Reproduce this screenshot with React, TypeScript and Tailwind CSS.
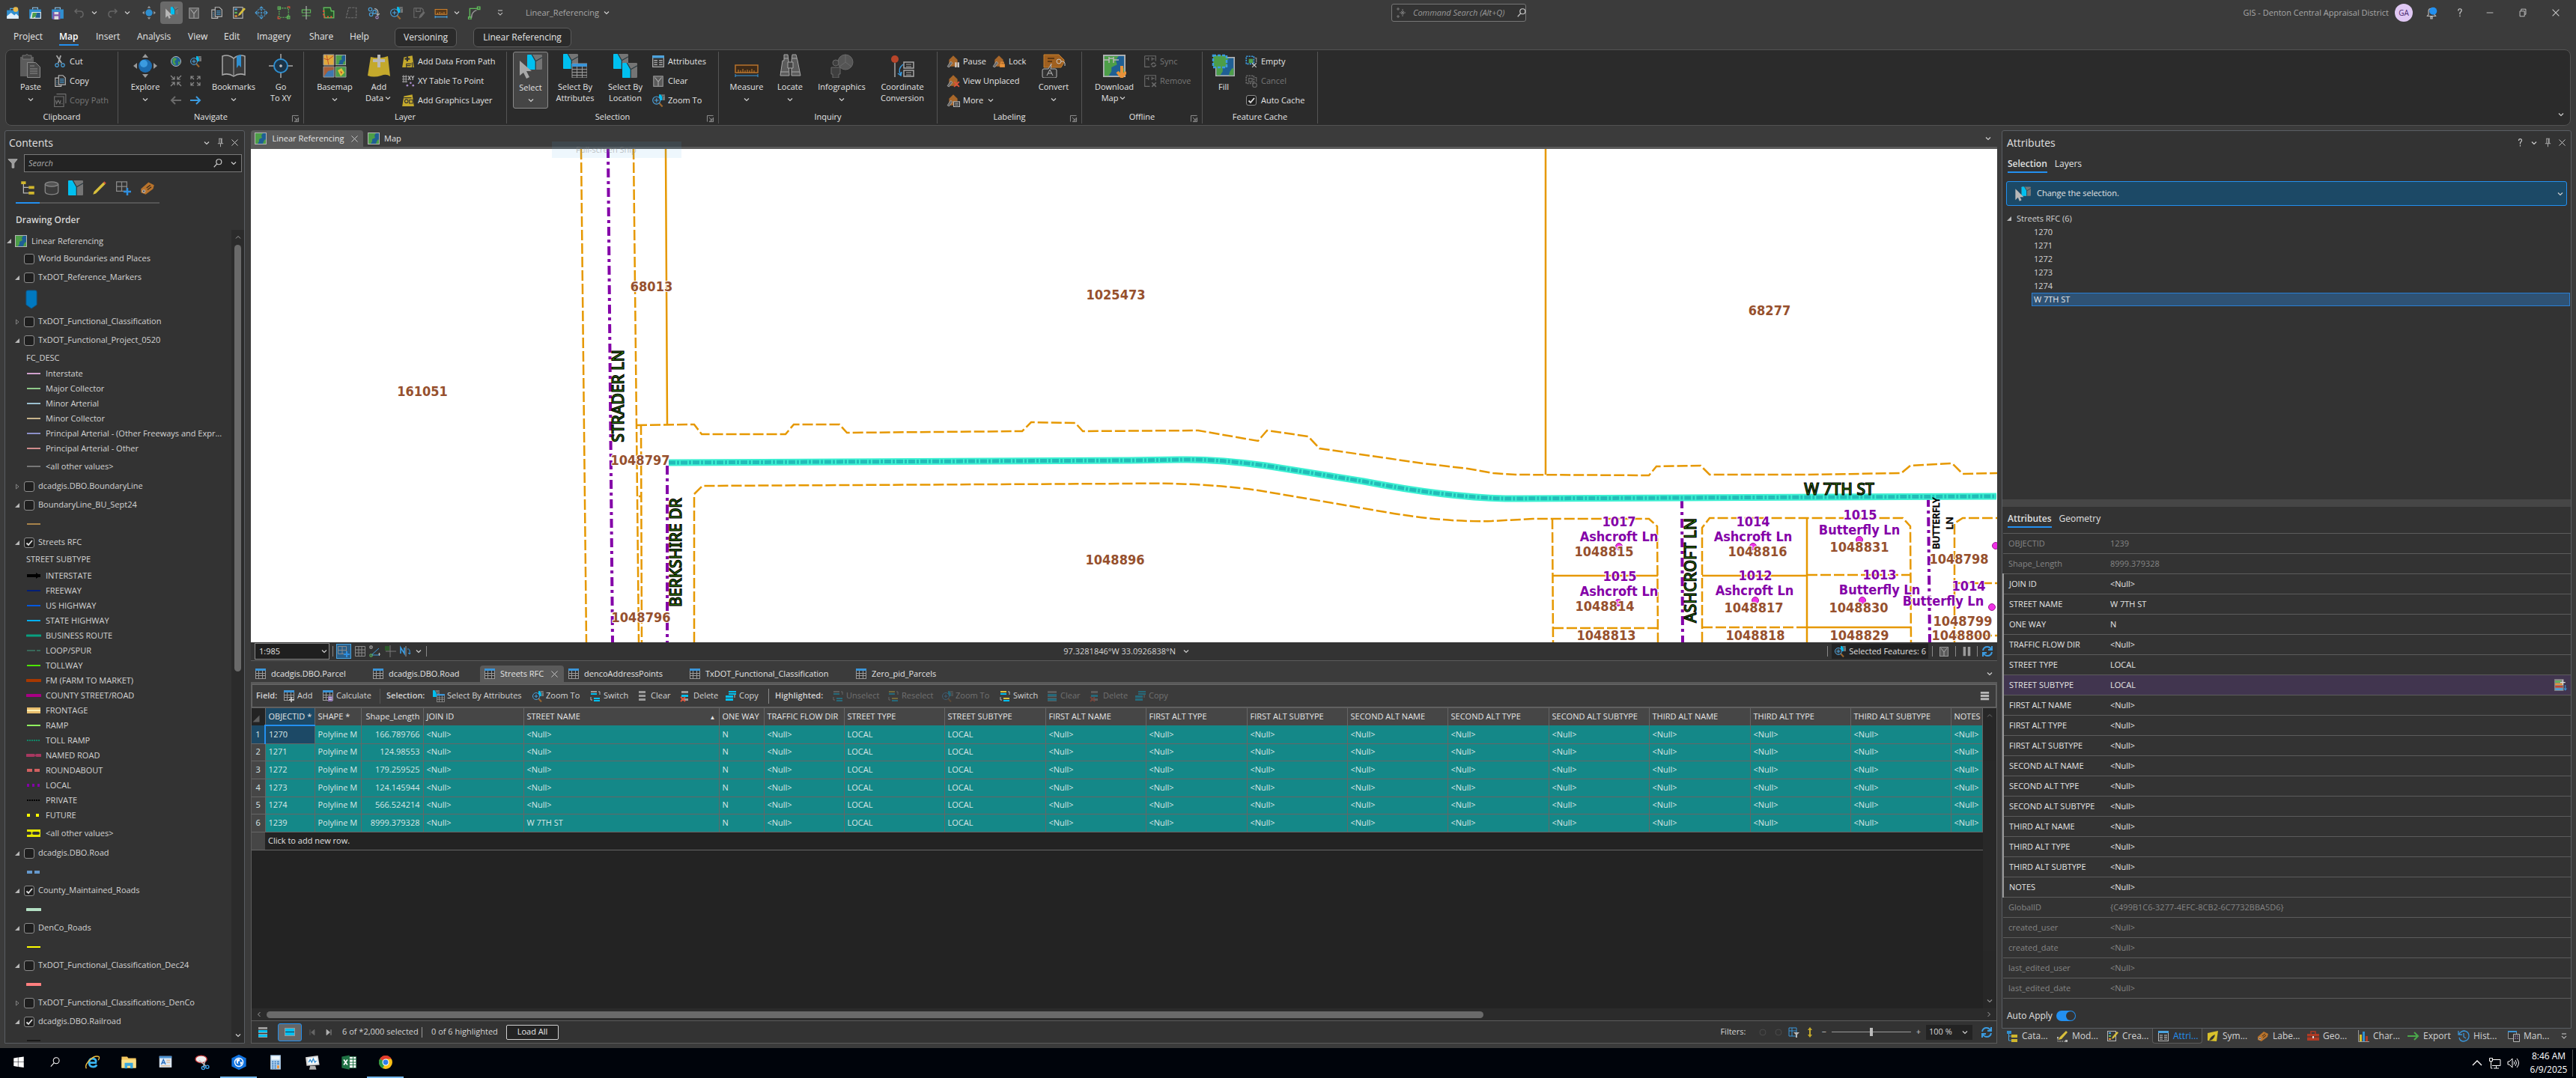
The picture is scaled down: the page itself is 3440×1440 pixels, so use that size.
import { ReactNode } from 'react';
import clsx from 'clsx';

/* ---------- icons ---------- */

const MapTile = ({ x = 0, y = 0, s = 16 }: { x?: number; y?: number; s?: number }) => (
  <g transform={`translate(${x} ${y}) scale(${s / 16})`}>
    <rect x=".5" y=".5" width="15" height="15" fill="#1f5f94" stroke="#b4b4b4" />
    <path d="M1 1h10l-2 3 1 3-4 2v3l-2 3H1z" fill="#4d9e48" />
    <path d="M12 12l2-3 1 1v5h-4z" fill="#4d9e48" />
  </g>
);

const CyanTile = ({ x = 0, y = 0, s = 16 }: { x?: number; y?: number; s?: number }) => (
  <g transform={`translate(${x} ${y}) scale(${s / 16})`}>
    <rect width="16" height="16" rx="1" fill="#757575" />
    <path d="M0 1q0-1 1-1h4l4 7v9H1q-1 0-1-1z" fill="#00c0f0" />
    <path d="M5 0l4 7v9M9 7l7-4" stroke="#2b3a40" fill="none" />
  </g>
);

const GridTable = ({ x = 0, y = 0 }: { x?: number; y?: number }) => (
  <g transform={`translate(${x} ${y})`}>
    <rect x=".5" y=".5" width="13" height="13" fill="#333" stroke="#9a9a9a" />
    <rect x="0" y="0" width="14" height="3" fill="#3b95d8" />
    <path d="M1 6.5h12M1 9.5h12M4.5 3v10M9.5 3v10" stroke="#9a9a9a" />
  </g>
);

const Lens = () => (
  <g fill="none">
    <path d="M9 11l4 4.5" stroke="#9b6730" strokeWidth="2" />
    <circle cx="6" cy="8" r="4.5" fill="#333" stroke="#4aa3df" />
    <path d="M3.5 8h5M6 5.5v5" stroke="#4aa3df" />
  </g>
);

const House = () => (
  <g>
    <path d="M8 1l5 5v8H3V6z" fill="#a8672a" />
    <path d="M1 14l4-6 2 2-4 5z" fill="#666" stroke="#b0b0b0" strokeWidth=".7" />
  </g>
);

const Stack = ({ a, b }: { a: string; b: string }) => (
  <g>
    <path d="M3 1h9v3H3z" fill={a} />
    <path d="M3 6h9v3H3z" fill={b} />
    <path d="M3 11h9v3H3z" fill={a} />
  </g>
);

const icons: Record<string, ReactNode> = {
  newProject: <g><path d="M1 5h14v10H1z" fill="#2f8fd0" /><path d="M1 12l5-4 4 3 2-2 3 3v3H1z" fill="#dfeefa" /><path d="M5 5V3h4" stroke="#4aa3df" fill="none" /><circle cx="11.5" cy="4" r="3" fill="#e8b84a" /></g>,
  openProject: <g><path d="M1 4h14v11H1z" fill="#2f8fd0" /><path d="M5 4V2h6v2" stroke="#8fc6ee" fill="none" /><path d="M4 7h11v8H2z" fill="#e2e6e8" /><path d="M5 8h5l-1 4-3 2H4z" fill="#4d9e48" /><path d="M10 8h4v6H8z" fill="#1f5f94" /></g>,
  saveProject: <g><path d="M1 4h14v11H1z" fill="#2f8fd0" /><path d="M5 4V2h6v2" stroke="#8fc6ee" fill="none" /><path d="M2 7h9v9H2z" fill="#7d55a8" /><path d="M4 7h5v3H4zM4 12h5v4H4z" fill="#ddd" /></g>,
  undo: <path d="M5 3L2 6l3 3M2 6h7q4 0 4 4t-4 4" fill="none" stroke="#666" strokeWidth="1.5" />,
  redo: <path d="M11 3l3 3-3 3M14 6H7q-4 0-4 4t4 4" fill="none" stroke="#666" strokeWidth="1.5" />,
  explore: <g><circle cx="8" cy="8" r="4.2" fill="#2f8fd0" /><path d="M8 0l2 2.5H6zM8 16l2-2.5H6zM0 8l2.5-2v4zM16 8l-2.5-2v4z" fill="#9a9a9a" /></g>,
  select: <g><CyanTile x={7} y={1} s={9} /><path d="M1 3v11l2.5-2.5L5 15l2-1-1.5-3H9z" fill="#b8b8b8" /></g>,
  clear: <g><rect x="2.5" y="2.5" width="11" height="12" fill="#5a5a5a" stroke="#9a9a9a" /><path d="M4 4l4 5v5M8 9l4-5" stroke="#a8a8a8" fill="none" /></g>,
  copy: <g fill="none" stroke="#b8b8b8"><path d="M6.5 1.5h5l3 3v8h-8z" fill="#333" /><path d="M6.5 4.5h-4v10h7v-2" /><path d="M8 6h5M8 8h5M8 10h5" stroke="#4aa3df" /><path d="M4 8h1M4 10h1M4 12h1" stroke="#4aa3df" /></g>,
  editForm: <g><rect x="1.5" y="1.5" width="11" height="13" fill="none" stroke="#b8b8b8" /><path d="M3 3h3v2H3z" fill="#4aa3df" /><path d="M3 7h3v2H3z" fill="#5fb85a" /><path d="M3 11h3v2H3z" fill="#e8923a" /><path d="M7 12l1-3 6-7 2 1.5-6 7z" fill="#d8bf3c" /></g>,
  move: <g stroke="#4aa3df" fill="none"><path d="M8 1v14M1 8h14" strokeDasharray="2 1" /><path d="M6 3l2-2 2 2M6 13l2 2 2-2M3 6L1 8l2 2M13 6l2 2-2 2" /><path d="M4 4h8v8H4z" strokeDasharray="1 1" /></g>,
  vertices: <g fill="none" stroke="#5fb85a"><path d="M2.5 2.5v11h11v-11L2.5 2.5" strokeDasharray="2 1" /><path d="M1 1h3v3H1zM12 12h3v3h-3z" stroke="#5fb85a" /><path d="M12 1h3v2M1 12v3h3" stroke="#e0533a" /></g>,
  align: <g fill="none" stroke="#5fb85a"><path d="M3 4.5h10M3 11.5h10M3 4v4h10V4" /><path d="M8 0v16" stroke="#b8b8b8" /></g>,
  reshape: <g fill="none"><path d="M2 2h8l1 4h3v8H3z" fill="#28502a" stroke="#5fb85a" strokeWidth="1.3" /><path d="M2 5v8h10" stroke="#e0533a" strokeDasharray="2 2" strokeWidth="2" /></g>,
  trapezoid: <path d="M5 2h9v12H2z" fill="none" stroke="#707070" strokeDasharray="3 1" />,
  trace: <g fill="none" stroke="#4aa3df"><circle cx="4" cy="4" r="2" /><circle cx="9" cy="7" r="2" /><circle cx="5" cy="10" r="2" /><path d="M9 3q5 1 4 7M11 9l2 2 2-2" stroke="#b8b8b8" /><circle cx="12" cy="13.5" r="1.5" stroke="#a58ac8" /></g>,
  zoomTo: <g><CyanTile x={9} y={1} s={7} /><Lens /></g>,
  saveEdits: <g fill="none" stroke="#6a6a6a"><path d="M2.5 2.5h9l2 2v3M2.5 2.5v11h4M5 2.5v4h5v-4" /><path d="M9 14l1-3 4-4 1 1-4 5z" fill="#6a6a6a" /></g>,
  measure: <g><path d="M1 4h14v6H1z" fill="#5a3a1a" stroke="#c9802f" /><path d="M4 10V8M6.5 10V7M9 10V8M11.5 10V7" stroke="#c9802f" /><path d="M1 13h14M1 11.5v3M15 11.5v3" stroke="#4aa3df" /></g>,
  route: <g fill="none" stroke="#5fb85a" strokeWidth="1.3"><path d="M3 14V3h10" /><path d="M1.5 13h3v3h-3zM12 1h3v3h-3z" /><path d="M5 14q0-7 6-9" stroke="#9a9a9a" /></g>,
  cut: <g fill="none"><path d="M4 1l6 9M9 1L6 10" stroke="#a8a8a8" strokeWidth="1.6" /><circle cx="4.5" cy="12.5" r="2" stroke="#4aa3df" /><circle cx="11.5" cy="12.5" r="2" stroke="#4aa3df" /></g>,
  copyPath: <g fill="none" stroke="#707070"><path d="M4 .5h11M15 .5v11M1.5 3.5h11v12h-11z" /><path d="M3 8l1 4 2-4 2 4 1-4M10 12h1" /></g>,
  globe: <g><circle cx="8" cy="8" r="6.5" fill="#1f5f94" stroke="#b8b8b8" /><path d="M4 4q4-2 5 1l-3 3 2 4-2 1q-4-4-2-9zM11 8l3 1-3 4z" fill="#4d9e48" /></g>,
  zoomIn: <g stroke="#8a8a8a" fill="none" strokeWidth="1.2"><path d="M1 1l5 5M2 6h4V2M15 1l-5 5M14 6h-4V2M1 15l5-5M2 10h4v4M15 15l-5-5M14 10h-4v4" /></g>,
  zoomOut: <g stroke="#8a8a8a" fill="none" strokeWidth="1.2"><path d="M2 2l4 4M2 6V2h4M14 2l-4 4M14 6V2h-4M2 14l4-4M2 10v4h4M14 14l-4-4M14 10v4h-4" /></g>,
  prev: <path d="M7 3L2 8l5 5M2 8h13" fill="none" stroke="#6a6a6a" strokeWidth="2" />,
  next: <path d="M9 3l5 5-5 5M14 8H1" fill="none" stroke="#3b9be0" strokeWidth="2" />,
  addPath: <g><path d="M3 3l10-2 2 14H1z" fill="#c4a92c" /><path d="M7 2v6M4 5h6" stroke="#333" strokeWidth="2" /><path d="M6 15v-4h6M6 13h5M13 9v6" stroke="#333" fill="none" /></g>,
  xyTable: <g><path d="M1 3h6M1 6h6M1 9h6M2.5 1v9M5.5 1v9" stroke="#9a9a9a" /><path d="M8 2l3 5M11 2L8 7M12 2l1.5 2.5L15 2M13.5 4.5V7" stroke="#c0c0c0" fill="none" /><circle cx="7" cy="13.5" r="1.2" fill="#a58ac8" /><circle cx="11" cy="10.5" r="1.2" fill="#a58ac8" /><circle cx="14" cy="13.5" r="1.2" fill="#a58ac8" /></g>,
  addGraphics: <g><path d="M3 3l10-2 2 14H1z" fill="#c4a92c" /><circle cx="6" cy="9" r="2" fill="none" stroke="#333" /><path d="M9.5 7.5h4v4h-4zM3 5h9" fill="none" stroke="#333" /></g>,
  attributes: <g><rect x="1.5" y="1.5" width="13" height="13" fill="#333" stroke="#b8b8b8" /><path d="M1 1h14v3H1z" fill="#4aa3df" /><path d="M3 7h4M3 9.5h4M3 12h4M9 7h4M9 9.5h4M9 12h4" stroke="#c8c8c8" /></g>,
  pause: <g><House /><path d="M10 9h2v6h-2zM13 9h2v6h-2z" fill="#d0d0d0" /></g>,
  lock: <g><House /><path d="M9 11h6v4H9z" fill="#e8923a" /><path d="M10.5 11V9h3v2" stroke="#e8923a" fill="none" /></g>,
  unplaced: <g><House /><path d="M9 9l6 6M15 9l-6 6" stroke="#e0533a" strokeWidth="1.8" /></g>,
  more: <g><House /><path d="M8.5 9.5h7v6h-7z" fill="#333" stroke="#b8b8b8" /><path d="M10 11.5h4M10 13.5h4" stroke="#b8b8b8" /></g>,
  sync: <g fill="none" stroke="#6a6a6a"><path d="M1.5 1.5h13v6M1.5 1.5v13h6M3 5h3M10 5h3M6 3v4M10 3v4" /><path d="M9 12q3-4 5-1M15 12q-3 4-5 1" strokeWidth="1.3" /></g>,
  remove: <g fill="none" stroke="#6a6a6a"><path d="M1.5 1.5h13v6M1.5 1.5v13h6M3 5h3M10 5h3M6 3v4M10 3v4" /><path d="M10 10l5 5M15 10l-5 5" strokeWidth="1.5" /></g>,
  empty: <g fill="none"><path d="M5 5h5v5H5z" fill="#4d9e48" /><path d="M2 2h9v9H2z" stroke="#3b9be0" strokeWidth="1.5" strokeDasharray="2 1" /><path d="M12 4h2v5" stroke="#9a9a9a" /><path d="M9 10l5 5M14 10l-5 5" stroke="#c8c8c8" /></g>,
  cancel: <g fill="none" stroke="#6a6a6a"><path d="M2 2h9v9H2z" strokeWidth="1.5" strokeDasharray="2 1" /><path d="M5 5h4v4H5zM12 4h2v5" /><circle cx="12" cy="13" r="2.5" /></g>,
  mapTile: <MapTile />,
  listOrder: <g><path d="M1 1h5v3H1zM9 6h6v3H9zM9 12h6v3H9z" fill="#d0b62c" /><path d="M3.5 4v9.5H9M3.5 7.5H9" stroke="#b8b8b8" fill="none" /></g>,
  database: <g fill="#3c3c3c" stroke="#8a8a8a"><path d="M1 4v8q0 3 7 3t7-3V4" /><ellipse cx="8" cy="4" rx="7" ry="2.5" fill="#555" /></g>,
  cyanTile: <CyanTile />,
  pencil: <g><path d="M1 15l1-3L12 2l2 2L4 14z" fill="#d8bf3c" /><path d="M12 2l1-1 2 2-1 1z" fill="#e0533a" /></g>,
  gridPlus: <g fill="none"><path d="M.5 1.5h11v10H.5zM6 1.5v10M.5 6.5h11" stroke="#8a8a8a" /><path d="M12 8v8M8 12h8" stroke="#2f8fe0" strokeWidth="2" /></g>,
  tag: <g><path d="M1 9l8-7 6 3-1 4-8 6-5-2z" fill="#b8732c" /><path d="M7 8l4-3M8 10l4-3" stroke="#3a2a1a" /><circle cx="4" cy="11.5" r="1.3" fill="#333" stroke="#b0b0b0" /></g>,
  filter: <path d="M1 2h14L10 8v7H7V8z" fill="#9a9a9a" stroke="#b8b8b8" />,
  search: <g fill="none" stroke="#c8c8c8" strokeWidth="1.4"><circle cx="9.5" cy="6" r="4" /><path d="M6.5 9L2 14" /></g>,
  pin: <path d="M5 1.5h6M6 2v7M10 2v7M9 2v7M3.5 9.5h9M8 10v5" fill="none" stroke="#c8c8c8" />,
  close: <path d="M3 3l10 10M13 3L3 13" stroke="#c8c8c8" strokeWidth="1.2" />,
  chevron: <path d="M4 6l4 4 4-4" fill="none" stroke="#d0d0d0" strokeWidth="1.6" />,
  up: <path d="M4 10l4-4 4 4" fill="none" stroke="#a0a0a0" strokeWidth="1.3" />,
  launcher: <path d="M3 13V3h10M13 6v7H6M6 6l5 5M11 7v4H7" fill="none" stroke="#a8a8a8" />,
  open: <path d="M14 2v12H2z" fill="#b8b8b8" />,
  shut: <path d="M5 2l7 6-7 6z" fill="none" stroke="#9a9a9a" strokeWidth="1.5" />,
  gridTable: <GridTable x={1} y={1} />,
  grid: <path d="M1.5 1.5h13v13h-13zM1.5 6h13M1.5 10h13M6 1.5v13M10 1.5v13" fill="none" stroke="#8a8a8a" />,
  snap: <g fill="none"><path d="M1 1h3v3H1zM12 12h3M13.5 10v4" stroke="#b8b8b8" /><path d="M3 13L13 4M3 13h10" stroke="#3b9be0" /><path d="M1 12h3v3H1z" stroke="#5fb85a" /></g>,
  crosshair: <g><path d="M1 1h6v6H1z" fill="#2d5a2a" /><path d="M8 0v16M2 8h14" stroke="#7a7a7a" /></g>,
  north: <g fill="none" stroke="#3b9be0"><path d="M2 11V3l5 8V3" strokeWidth="1.6" /><path d="M9 1v14" stroke="#9a9a9a" /><path d="M11 5q4-1 3 6M12 10l2 2 1-2" /></g>,
  pauseBars: <path d="M3 1h4v14H3zM10 1h4v14h-4z" fill="#9a9a9a" />,
  refresh: <g fill="none" stroke="#3b9be0" strokeWidth="2"><path d="M2 7q1-5 6-5 3 0 5 3M14 1v5H9M14 9q-1 5-6 5-3 0-5-3M2 15v-5h5" /></g>,
  addField: <g><GridTable x={1} y={0} /><path d="M11 9v7M8 12.5h7" stroke="#d0d0d0" strokeWidth="1.5" /></g>,
  calcField: <g><GridTable x={1} y={0} /><path d="M8 8h6v7H8z" fill="#8a70b0" /><path d="M9 10h4M9 12.5h4" stroke="#ddd" /></g>,
  selectBy: <g><CyanTile x={0} y={0} s={9} /><g transform="translate(5 5) scale(.78)"><GridTable /></g></g>,
  switch: <g><path d="M2 1h8v2H2z" fill="#9a9a9a" /><path d="M2 4h8v2H2z" fill="#00c0f0" /><path d="M6 10h8v2H6zM6 13h8v2H6z" fill="#00c0f0" /><path d="M12 2h2v4M2 9v4h2" stroke="#b8b8b8" fill="none" /></g>,
  switchHi: <g><path d="M2 1h8v2H2z" fill="#d8bf3c" /><path d="M2 4h8v2H2z" fill="#00c0f0" /><path d="M6 10h8v2H6z" fill="#d8bf3c" /><path d="M6 13h8v2H6z" fill="#00c0f0" /><path d="M12 2h2v4M2 9v4h2" stroke="#b8b8b8" fill="none" /></g>,
  rows: <Stack a="#9a9a9a" b="#9a9a9a" />,
  rowsDelete: <g><Stack a="#9a9a9a" b="#00c0f0" /><path d="M2 9l6 6M8 9l-6 6" stroke="#e0533a" strokeWidth="1.8" /></g>,
  rowsCopy: <g><path d="M5 1h10v2H5zM5 4h10v2H5z" fill="#00c0f0" /><path d="M1 7h10v3H1zM1 11h10v3H1z" fill="#00c0f0" /><path d="M13 6v4" stroke="#b8b8b8" /></g>,
  rowsCyan: <g><path d="M2 1h12v14H2z" fill="#9a9a9a" /><path d="M2 5h12v3H2zM2 11h12v3H2z" fill="#00c0f0" /><path d="M2 4.5h12M2 9.5h12" stroke="#333" /></g>,
  rowsActive: <g><path d="M1 2h14v11H1z" fill="#9a9a9a" /><path d="M2 3h12v4H2zM2 8h12v4H2z" fill="#00c0f0" /><path d="M2 7.5h12" stroke="#234" /></g>,
  first: <path d="M4 3v10M12 3v10L6 8z" fill="#666" stroke="#666" />,
  last: <path d="M12 3v10M4 3v10l6-5z" fill="#b0b0b0" stroke="#b0b0b0" />,
  menu: <path d="M2 2h12v3H2zM2 6.5h12v3H2zM2 11h12v3H2z" fill="#b8b8b8" />,
  question: <g fill="none" stroke="#c8c8c8" strokeWidth="1.4"><path d="M5.5 5q0-3 2.5-3t2.5 2.5Q10.5 6 8 8v2.5M8 12v2" /></g>,
  bell: <g><path d="M3 12h10l-1.5-2V6q0-3-3.5-3T4.5 6v4zM7 13h2v2H7z" fill="none" stroke="#b8b8b8" /><circle cx="10" cy="6" r="4.5" fill="#2390f0" /></g>,
  minimize: <path d="M3 8h10" stroke="#d0d0d0" />,
  restore: <path d="M3.5 5.5h7v8h-7zM5.5 5V2.5h7v8H11" fill="none" stroke="#d0d0d0" />,
  sparkle: <path d="M4 1v4M2 3h4M10 3v10M6 8h8M4 11v4M2 13h4M8 6l4 4M12 6l-4 4" stroke="#7a7a7a" />,
  catalog: <g fill="none"><path d="M1 1h6v4H1z" fill="#2f8fd0" /><path d="M7 6h8v4H7zM7 12h8v4H7z" fill="#d0b62c" /><path d="M3.5 5v9H7M3.5 8H7" stroke="#4aa3df" /></g>,
  modify: <g><path d="M3 13l1-3 9-9 2 2-8 9z" fill="#d8bf3c" /><path d="M2 11v4h12" stroke="#b8b8b8" fill="none" strokeDasharray="2 1" /><path d="M1 9h2v2H1zM12 13h3v3h-3z" fill="#b8b8b8" /></g>,
  symbology: <g><path d="M1 4l14-3-2 14-12-1z" fill="#d8c02c" /><path d="M3 14q2-6 8-8-1 7-8 8z" fill="#333" /></g>,
  toolbox: <g><path d="M0 5h16v9H0z" fill="#b03a24" /><path d="M5 5V2h6v3" fill="none" stroke="#b03a24" strokeWidth="1.5" /><path d="M0 9h16" stroke="#333" /><path d="M7 8h2v3H7z" fill="#ddd" /></g>,
  chart: <g><path d="M1.5 0v15.5H16" stroke="#9a9a9a" fill="none" /><path d="M3 6h3v9H3z" fill="#d8c02c" /><path d="M7 2h3v13H7z" fill="#2f8fd0" /><path d="M11 8h3v7h-3z" fill="#b03a24" /></g>,
  export: <path d="M0 8h14M9 3l5 5-5 5" fill="none" stroke="#4aa84a" strokeWidth="2" />,
  history: <g fill="none" stroke="#3b95d8" strokeWidth="1.3"><path d="M2 5q3-4 7-4 6 1 6 7t-7 7q-5 0-6-5M1 1v5h5M8 4v5l3 2" /></g>,
  manage: <g><path d="M.5 1.5h11v10H.5z" fill="#333" stroke="#9a9a9a" /><path d="M0 1h12v2H0z" fill="#3b95d8" /><path d="M7.5 5.5h8v10h-8z" fill="#333" stroke="#b8b8b8" /><path d="M9 8h2M9 11h2M12 8h2M12 11h2" stroke="#a58ac8" /></g>,
  addRow: <g><path d="M1 1h11v14H1z" fill="#888" /><path d="M2 3h7v2H2z" fill="#5fb85a" /><path d="M2 6h9v2H2z" fill="#e8923a" /><path d="M2 9h9v2H2z" fill="#c04030" /><path d="M2 12h9v2H2z" fill="#4aa3df" /><path d="M11 2v6M8 5h6" stroke="#ddd" /><path d="M14 8v6M12.5 12l1.5 2 1.5-2" stroke="#3b95d8" fill="none" /></g>,
  filterTable: <g><path d="M1 2h10v11H1z" fill="none" stroke="#3b95d8" /><path d="M1 6h10M5 2v11" stroke="#3b95d8" /><path d="M7 8h8l-3 3v4h-2v-4z" fill="#b8b8b8" /></g>,
  updown: <path d="M8 1l3 4H9v6h2l-3 4-3-4h2V5H5z" fill="#c4a92c" />,
  dot: <circle cx="8" cy="8" r="4" fill="none" stroke="#4a4a4a" />,
  overflow: <path d="M4 4h8M4 8l4 4 4-4" fill="none" stroke="#d0d0d0" strokeWidth="1.4" />,
};

const Icon = ({ name, size = 16, className }: { name: string; size?: number; className?: string }) => (
  <svg viewBox="0 0 16 16" width={size} height={size} className={clsx('shrink-0', className)} aria-hidden="true">
    {icons[name]}
  </svg>
);

const bigIcons: Record<string, ReactNode> = {
  paste: <g><path d="M2 4h18v26H2z" fill="#5c5c5c" /><path d="M5 2h4q2-3 4 0h4v5H5z" fill="#444" stroke="#777" /><path d="M11.5 11.5h11l6 6v14h-17z" fill="#4a4a4a" stroke="#8a8a8a" /><path d="M15 16h6M15 20h10M15 23h10M15 26h10" stroke="#8a8a8a" /></g>,
  explore: <g><circle cx="16" cy="16" r="9" fill="#1c6cb0" /><circle cx="14" cy="13" r="5" fill="#3b9be0" /><path d="M16 0l4 5h-8zM16 32l4-5h-8zM0 16l5-4v8zM32 16l-5-4v8z" fill="#9a9a9a" /></g>,
  bookmarks: <g fill="none"><path d="M16 6Q9 0 1 3v25q8-3 15 2 7-5 15-2V3q-8-3-15 3z" fill="#3a3a3a" stroke="#a8a8a8" strokeWidth="1.5" /><path d="M16 6v24" stroke="#a8a8a8" /><path d="M20 3l6-2v17l-3-3-3 4z" fill="#2f8fd0" /></g>,
  goto: <g fill="none" stroke="#a8a8a8"><path d="M16 0v9M16 23v9M0 16h9M23 16h9" strokeWidth="1.5" /><circle cx="16" cy="16" r="9" stroke="#2f8fd0" strokeWidth="2" fill="#1b3448" /><circle cx="16" cy="16" r="1.5" fill="#c8c8c8" /></g>,
  basemap: <g><path d="M1 1h14v14H1z" fill="#e0a93c" /><path d="M1 6l6 2 8-6M5 1l3 14" stroke="#c0502a" fill="none" /><MapTile x={17} y={1} s={14} /><path d="M1 17h14v14H1z" fill="#a8603a" /><path d="M1 31l6-8 8-2v10z" fill="#3f78b0" /><path d="M17 17h14v14H17z" fill="#4d9e48" /><path d="M20 22l5-3 4 6-5 5z" fill="#e0c03c" /><path d="M23 23l3 1-1 3z" fill="#c0502a" /><path d="M1 1h14v14H1zM17 17h14v14H17zM1 17h14v14H1z" fill="none" stroke="#9a9a9a" /></g>,
  addData: <g><path d="M5 4q12 3 23-1l3 27q-5-4-12-1-10 3-18 0z" fill="#c4a92c" /><path d="M16 1v17M8 9h16" stroke="#b8b8b8" strokeWidth="4" /></g>,
  select: <g><CyanTile x={11} y={0} s={20} /><path d="M1 8v20l5-4 4 8 4-2-4-8h7z" fill="#a8a8a8" /></g>,
  selectAttr: <g><CyanTile s={20} /><path d="M12 13h20v19H12z" fill="#333" stroke="#9a9a9a" /><path d="M12 13h20v4H12z" fill="#3b95d8" /><path d="M12 20.5h20M12 24.5h20M12 28.5h20M18.5 17v15M25.5 17v15" stroke="#9a9a9a" /></g>,
  selectLoc: <g><CyanTile s={20} /><CyanTile x={12} y={12} s={20} /></g>,
  measure: <g><path d="M1 15h30v10H1z" fill="#3d2a18" stroke="#b8732c" strokeWidth="1.5" /><path d="M5 25v-4M8 25v-3M11 25v-5M14 25v-3M17 25v-4M20 25v-3M23 25v-5M26 25v-3" stroke="#c9802f" /><path d="M1 29h30M1 27v4M31 27v4" stroke="#3b9be0" /></g>,
  locate: <g fill="#5c5c5c" stroke="#a8a8a8"><path d="M8 1h5l1 8 1 20H3L6 9H8zM19 1h5l2 8 4 20H18l0-20z" /><path d="M13 11h7v8h-7z" fill="#444" /><path d="M3 24h11M18 24h11M8 6h6M19 6h6" /></g>,
  infographics: <g fill="#3f3f3f" stroke="#6a6a6a"><circle cx="21" cy="11" r="10" fill="#555" /><path d="M21 11V1M21 11l8 6M21 11l-8 6" /><circle cx="8" cy="12" r="4" /><path d="M2 18h12v9h-2v5H4v-5H2z" /></g>,
  coord: <g fill="none"><circle cx="6" cy="7" r="5" fill="#b8452a" /><path d="M6 12v19" stroke="#a8a8a8" strokeWidth="1.5" /><path d="M17 14q-8 6-3 14M10 26l4 3 1-5" stroke="#3b9be0" strokeWidth="1.5" /><path d="M18 11h13v8H18zM18 22h13v8H18z" stroke="#a8a8a8" strokeWidth="1.5" /><path d="M21 14h7M21 17h7M21 25h7M21 28h7" stroke="#a8a8a8" /></g>,
  convert: <g><path d="M3 1h20l7 7v3l-4 7H3z" fill="#a0601f" stroke="#c9802f" /><path d="M8 6h9M8 10h6" stroke="#4a2c10" strokeWidth="1.5" /><circle cx="23" cy="10" r="3" fill="none" stroke="#c8c8c8" /><path d="M26 10q6-1 5 6" stroke="#c8c8c8" fill="none" /><path d="M3 20h6l4-7-1 7h6q2 0 2 2v8q0 2-2 2H3q-2 0-2-2v-8q0-2 2-2z" fill="#333" stroke="#b8b8b8" /><path d="M7 29l4-8 4 8M8 26h6" stroke="#b8b8b8" fill="none" /></g>,
  download: <g><MapTile x={1} y={1} s={30} /><path d="M1 8h8M15 8h7M9 4v8M15 4v8M9 6h6" stroke="#b8b8b8" strokeWidth="1.5" /><path d="M26 16v13M20 24l6 7 6-7" stroke="#e8923a" strokeWidth="4" fill="none" /></g>,
  fill: <g><MapTile x={5} y={4} s={26} /><path d="M2 2h18v16H2z" fill="#4d9e48" stroke="#3b9be0" strokeWidth="2.5" strokeDasharray="4 2" /></g>,
};

const BigIcon = ({ name }: { name: string }) => (
  <svg viewBox="0 0 32 32" className="size-8 shrink-0" aria-hidden="true">{bigIcons[name]}</svg>
);

/* ---------- small shared controls ---------- */

const Check = ({ id, checked, label }: { id: string; checked?: boolean; label?: string }) => (
  <span className="relative flex size-[14px] shrink-0">
    <input
      id={id}
      type="checkbox"
      aria-label={label}
      defaultChecked={checked}
      className="size-[14px] appearance-none rounded-[3px] border border-[#8c8c8c] bg-[#1f1f1f]"
    />
    {checked && (
      <svg viewBox="0 0 14 14" className="pointer-events-none absolute inset-0">
        <path d="M3.5 7.5l2.5 2.5 5-6" fill="none" stroke="#e0e0e0" strokeWidth="1.8" />
      </svg>
    )}
  </span>
);

const BigButton = ({ icon, lines, width, drop, className }: { icon: string; lines: string[]; width: string; drop?: boolean; className?: string }) => (
  <button className={clsx('flex flex-col items-center pt-[3px] leading-[15px]', width, className)}>
    <BigIcon name={icon} />
    <span className="mt-1 whitespace-nowrap">{lines[0]}</span>
    {lines[1] && (
      <span className="flex items-center whitespace-nowrap">
        {lines[1]}
        {drop && <Icon name="chevron" size={12} />}
      </span>
    )}
    {drop && !lines[1] && <Icon name="chevron" size={12} className="mt-1" />}
  </button>
);

const SmallButton = ({ icon, label, dim, drop }: { icon: string; label: string; dim?: boolean; drop?: boolean }) => (
  <button className={clsx('flex h-[26px] items-center gap-1 whitespace-nowrap', dim && 'text-[#777]')}>
    <Icon name={icon} size={18} />
    {label}
    {drop && <Icon name="chevron" size={12} />}
  </button>
);

const Group = ({ label, width, launcher, children }: { label: string; width: string; launcher?: boolean; children: ReactNode }) => (
  <section className={clsx('relative flex shrink-0 flex-col border-r border-[#555]', width)}>
    <div className="flex h-[78px] items-start">{children}</div>
    <h2 className="text-center leading-[18px]">{label}</h2>
    {launcher && (
      <button aria-label={`${label} options`} className="absolute right-1 bottom-0">
        <Icon name="launcher" size={13} />
      </button>
    )}
  </section>
);

/* ---------- title bar and ribbon ---------- */

const quickTools = ['explore', 'select', 'clear', 'copy', 'editForm', 'move', 'vertices', 'align', 'reshape', 'trapezoid', 'trace', 'zoomTo', 'saveEdits', 'measure'];

const TitleBar = () => (
  <header className="flex h-[34px] items-center px-[2px] text-[#a8a8a8]">
    <div className="flex flex-[57%] items-center">
      {['newProject', 'openProject', 'saveProject'].map((n) => (
        <button key={n} aria-label={n} className="flex w-[30px] justify-center"><Icon name={n} size={18} /></button>
      ))}
      {['undo', 'redo'].map((n) => (
        <button key={n} aria-label={n} className="flex w-11 items-center gap-[6px] pl-[6px]">
          <Icon name={n} /><Icon name="chevron" size={12} />
        </button>
      ))}
      <div className="ml-1 flex">
        {quickTools.map((n) => (
          <button
            key={n}
            aria-label={n}
            className={clsx('flex h-[30px] w-[30px] items-center justify-center rounded-sm', n === 'select' && 'bg-[#6a6a6a]')}
          >
            <Icon name={n} size={18} />
          </button>
        ))}
      </div>
      <Icon name="chevron" size={12} />
      <button aria-label="Route tool" className="ml-2"><Icon name="route" size={18} /></button>
      <Icon name="overflow" size={12} className="ml-5" />
      <button className="ml-7 flex items-center gap-1">Linear_Referencing <Icon name="chevron" size={12} /></button>
    </div>
    <label className="flex h-6 w-[180px] shrink-0 items-center gap-2 rounded-[3px] border border-[#777] bg-[#333] px-1">
      <Icon name="sparkle" />
      <input placeholder="Command Search (Alt+Q)" aria-label="Command Search" className="w-[130px] bg-transparent italic outline-none placeholder:text-[#999]" />
      <Icon name="search" size={14} />
    </label>
    <div className="flex flex-[43%] items-center justify-end">
      <span>GIS - Denton Central Appraisal District</span>
      <span className="mr-4 ml-2 flex size-6 items-center justify-center rounded-full bg-[#e0c8f4] text-[10px] text-[#4a2870]">GA</span>
      <button aria-label="Notifications" className="w-10"><Icon name="bell" size={18} /></button>
      <button aria-label="Help" className="w-10"><Icon name="question" size={14} /></button>
      <button aria-label="Minimize" className="w-11"><Icon name="minimize" size={14} /></button>
      <button aria-label="Restore" className="w-11"><Icon name="restore" size={14} /></button>
      <button aria-label="Close" className="w-8"><Icon name="close" size={14} /></button>
    </div>
  </header>
);

const ribbonTabs = [
  ['Project', 'w-[61px]'], ['Map', 'w-[49px]'], ['Insert', 'w-[55px]'], ['Analysis', 'w-[68px]'], ['View', 'w-[48px]'],
  ['Edit', 'w-[44px]'], ['Imagery', 'w-[70px]'], ['Share', 'w-[54px]'], ['Help', 'w-[60px]'],
];

const RibbonTabs = () => (
  <nav className="flex h-8 items-center pl-[18px] text-[12px] text-[#e4e4e4]">
    {ribbonTabs.map(([t, w]) => (
      <div key={t} className={w}>
        <button className={clsx('border-b-2 leading-[20px]', t === 'Map' ? 'border-[#2390f0] font-semibold text-white' : 'border-transparent')}>{t}</button>
      </div>
    ))}
    <button className="h-[26px] w-[83px] rounded-md border border-[#5c5c5c] bg-[#2b2b2b]">Versioning</button>
    <button className="ml-[22px] h-[26px] w-[131px] rounded-md border border-[#5c5c5c] bg-[#2b2b2b]">Linear Referencing</button>
  </nav>
);

const Ribbon = () => (
  <div className="relative mx-[7px] flex h-[102px] rounded-lg border border-[#525252] bg-[#2b2b2b] py-[2px] text-[#e4e4e4]">
    <Group label="Clipboard" width="w-[150px]">
      <BigButton icon="paste" lines={['Paste']} width="ml-1 w-[58px]" drop />
      <div className="pl-[1px]">
        <SmallButton icon="cut" label="Cut" />
        <SmallButton icon="copy" label="Copy" />
        <SmallButton icon="copyPath" label="Copy Path" dim />
      </div>
    </Group>
    <Group label="Navigate" width="w-[248px]" launcher>
      <BigButton icon="explore" lines={['Explore']} width="ml-2 w-14" drop />
      <div className="grid w-[52px] grid-cols-2">
        {['globe', 'zoomTo', 'zoomIn', 'zoomOut', 'prev', 'next'].map((n) => (
          <button key={n} aria-label={n} className="flex h-[26px] items-center justify-center"><Icon name={n} /></button>
        ))}
      </div>
      <BigButton icon="bookmarks" lines={['Bookmarks']} width="ml-1 w-[68px]" drop />
      <BigButton icon="goto" lines={['Go', 'To XY']} width="ml-1 w-[50px]" />
    </Group>
    <Group label="Layer" width="w-[271px]">
      <BigButton icon="basemap" lines={['Basemap']} width="ml-3 w-[58px]" drop />
      <BigButton icon="addData" lines={['Add', 'Data']} width="w-[60px]" drop />
      <div>
        <SmallButton icon="addPath" label="Add Data From Path" />
        <SmallButton icon="xyTable" label="XY Table To Point" />
        <SmallButton icon="addGraphics" label="Add Graphics Layer" />
      </div>
    </Group>
    <Group label="Selection" width="w-[283px]" launcher>
      <BigButton icon="select" lines={['Select']} width="ml-2 w-[47px]" className="h-[76px] rounded-[3px] border border-[#8a8a8a] bg-[#454545]" drop />
      <BigButton icon="selectAttr" lines={['Select By', 'Attributes']} width="ml-1 w-[64px]" />
      <BigButton icon="selectLoc" lines={['Select By', 'Location']} width="ml-1 w-[62px]" />
      <div className="ml-1">
        <SmallButton icon="attributes" label="Attributes" />
        <SmallButton icon="clear" label="Clear" />
        <SmallButton icon="zoomTo" label="Zoom To" />
      </div>
    </Group>
    <Group label="Inquiry" width="w-[292px]">
      <BigButton icon="measure" lines={['Measure']} width="ml-2 w-[58px]" drop />
      <BigButton icon="locate" lines={['Locate']} width="w-[58px]" drop />
      <BigButton icon="infographics" lines={['Infographics']} width="w-[80px]" drop />
      <BigButton icon="coord" lines={['Coordinate', 'Conversion']} width="w-[82px]" />
    </Group>
    <Group label="Labeling" width="w-[193px]" launcher>
      <div className="ml-3 w-[116px]">
        <div className="flex gap-2">
          <SmallButton icon="pause" label="Pause" />
          <SmallButton icon="lock" label="Lock" />
        </div>
        <SmallButton icon="unplaced" label="View Unplaced" />
        <SmallButton icon="more" label="More" drop />
      </div>
      <BigButton icon="convert" lines={['Convert']} width="w-[54px]" drop />
    </Group>
    <Group label="Offline" width="w-[161px]" launcher>
      <BigButton icon="download" lines={['Download', 'Map']} width="ml-3 w-[62px]" drop />
      <div className="ml-2">
        <SmallButton icon="sync" label="Sync" dim />
        <SmallButton icon="remove" label="Remove" dim />
      </div>
    </Group>
    <Group label="Feature Cache" width="w-[154px]">
      <BigButton icon="fill" lines={['Fill']} width="ml-2 w-10" />
      <div className="ml-2">
        <SmallButton icon="empty" label="Empty" />
        <SmallButton icon="cancel" label="Cancel" dim />
        <label htmlFor="auto-cache" className="flex h-[26px] items-center gap-[6px] pl-[2px]">
          <Check id="auto-cache" checked /> Auto Cache
        </label>
      </div>
    </Group>
    <button aria-label="Collapse ribbon" className="absolute right-[6px] bottom-2"><Icon name="chevron" size={12} /></button>
  </div>
);

/* ---------- contents pane ---------- */

interface Sym {
  label: string;
  color: string;
  w?: number;
  dash?: string;
  cap?: 'round' | 'butt';
  core?: string;
}

const Swatch = ({ s }: { s: Sym }) => (
  <svg viewBox="0 0 20 12" className="h-3 w-5 shrink-0">
    <path d="M1 6h18" stroke={s.color} strokeWidth={s.w ?? 2} strokeDasharray={s.dash} strokeLinecap={s.cap ?? 'butt'} />
    {s.core && <path d="M1 6h18" stroke={s.core} strokeWidth="2" />}
    {s.label === 'INTERSTATE' && <path d="M13 2l6 4-6 4z" fill="#000" />}
    {s.label === '<all other values>' && s.w === 10 && <path d="M1 6h4M10 6h6" stroke="#333" strokeWidth="4" strokeLinecap="round" />}
  </svg>
);

const functional: Sym[] = [
  { label: 'Interstate', color: '#d0a0cc' },
  { label: 'Major Collector', color: '#8fc98a' },
  { label: 'Minor Arterial', color: '#9cc0d0' },
  { label: 'Minor Collector', color: '#c8b48c' },
  { label: 'Principal Arterial - (Other Freeways and Expr...', color: '#8c90c8' },
  { label: 'Principal Arterial - Other', color: '#d08c8c' },
];

const subtypes: Sym[] = [
  { label: 'INTERSTATE', color: '#000', w: 4 },
  { label: 'FREEWAY', color: '#001e78', w: 2 },
  { label: 'US HIGHWAY', color: '#0058e0', w: 2 },
  { label: 'STATE HIGHWAY', color: '#00b0f0', w: 2 },
  { label: 'BUSINESS ROUTE', color: '#08a080', w: 3, cap: 'round' },
  { label: 'LOOP/SPUR', color: '#3c7c68', w: 1.5, dash: '11 2 6 2' },
  { label: 'TOLLWAY', color: '#4ce600', w: 2 },
  { label: 'FM (FARM TO MARKET)', color: '#a83800', w: 4, cap: 'round' },
  { label: 'COUNTY STREET/ROAD', color: '#a80084', w: 4, cap: 'round' },
  { label: 'FRONTAGE', color: '#e8be6e', w: 8, core: '#fff0b4' },
  { label: 'RAMP', color: '#90f060', w: 2 },
  { label: 'TOLL RAMP', color: '#108868', w: 2, dash: '2 1' },
  { label: 'NAMED ROAD', color: '#a83860', w: 4, cap: 'round', dash: '9 4' },
  { label: 'ROUNDABOUT', color: '#d06060', w: 4, dash: '7 3' },
  { label: 'LOCAL', color: '#8400a8', w: 4, dash: '3 4' },
  { label: 'PRIVATE', color: '#000', w: 2, dash: '2 1' },
  { label: 'FUTURE', color: '#ffff00', w: 4, dash: '4 8' },
];

const Layer = ({ name, open, leaf, checked }: { name: string; open?: boolean; leaf?: boolean; checked?: boolean }) => (
  <li className="flex h-[25px] items-center gap-[2px] pl-3">
    <span className="w-[11px]">{!leaf && <Icon name={open ? 'open' : 'shut'} size={8} />}</span>
    <Check id={name} checked={checked} />
    <label htmlFor={name} className="pl-[3px]">{name}</label>
  </li>
);

const SymbolRow = ({ s, height = 'h-5' }: { s: Sym; height?: string }) => (
  <li className={clsx('flex shrink-0 items-center gap-[6px] pl-[28px]', height)}><Swatch s={s} />{s.label}</li>
);

const SymbolOnly = ({ s }: { s: Omit<Sym, 'label'> }) => (
  <li className="flex h-[25px] items-center pl-[28px]"><Swatch s={{ label: '', ...s }} /></li>
);

const PaneButtons = ({ help }: { help?: boolean }) => (
  <div className="flex items-center gap-[6px]">
    {help && <button aria-label="Help"><Icon name="question" size={13} /></button>}
    <button aria-label="Pane menu"><Icon name="chevron" size={12} /></button>
    <button aria-label="Pin"><Icon name="pin" size={13} /></button>
    <button aria-label="Close pane"><Icon name="close" size={13} /></button>
  </div>
);

const Contents = () => (
  <aside className="flex w-[321px] shrink-0 flex-col rounded-t-[3px] border border-[#5a5e63] bg-[#333]">
    <div className="flex h-[31px] items-center justify-between pr-[6px] pl-[5px]">
      <h2 className="text-[14px] text-[#e0e0e0]">Contents</h2>
      <PaneButtons />
    </div>
    <div className="flex items-center gap-2 px-[3px]">
      <Icon name="filter" size={14} />
      <label className="flex h-6 flex-1 items-center border border-[#7a7a7a] bg-[#232323] pr-1 pl-[5px]">
        <input placeholder="Search" aria-label="Search layers" className="min-w-0 flex-1 bg-transparent italic outline-none placeholder:text-[#aaa]" />
        <Icon name="search" size={14} />
        <Icon name="chevron" size={12} className="ml-2" />
      </label>
    </div>
    <div className="mt-[5px] flex pl-[14px]">
      {['listOrder', 'database', 'cyanTile', 'pencil', 'gridPlus', 'tag'].map((n, i) => (
        <button
          key={n}
          aria-label={n}
          className={clsx('flex h-[37px] w-8 items-center justify-center border-b-2 pb-1', i === 0 ? 'border-[#2390f0]' : 'border-[#555]')}
        >
          <Icon name={n} size={20} />
        </button>
      ))}
    </div>
    <h3 className="mt-3 mb-[3px] pl-[14px] text-[12px] leading-[20px] font-semibold">Drawing Order</h3>
    <div className="flex min-h-0 flex-1">
      <ul className="min-w-0 flex-1 overflow-hidden whitespace-nowrap">
        <li className="flex h-[26px] items-center gap-1 pt-1 pl-[1px]">
          <Icon name="open" size={8} />
          <Icon name="mapTile" />
          <span className="pl-[2px]">Linear Referencing</span>
        </li>
        <Layer name="World Boundaries and Places" leaf />
        <Layer name="TxDOT_Reference_Markers" open />
        <li className="flex h-[34px] items-center pl-[27px]">
          <svg viewBox="0 0 16 26" className="h-[26px] w-4"><path d="M1 3q0-2 2-2h10q2 0 2 2v17l-7 5-7-5z" fill="#0079c1" stroke="#0b5f96" /></svg>
        </li>
        <Layer name="TxDOT_Functional_Classification" />
        <Layer name="TxDOT_Functional_Project_0520" open />
        <li className="h-[22px] pl-[28px] leading-[22px]">FC_DESC</li>
        {functional.map((s) => <SymbolRow key={s.label} s={s} />)}
        <SymbolRow s={{ label: '<all other values>', color: '#777' }} height="h-[28px]" />
        <Layer name="dcadgis.DBO.BoundaryLine" />
        <Layer name="BoundaryLine_BU_Sept24" open />
        <SymbolOnly s={{ color: '#a8834a', w: 2 }} />
        <Layer name="Streets RFC" open checked />
        <li className="h-[22px] pl-[28px] leading-[20px]">STREET SUBTYPE</li>
        {subtypes.map((s) => <SymbolRow key={s.label} s={s} />)}
        <SymbolRow s={{ label: '<all other values>', color: '#e6e600', w: 10 }} height="h-[28px]" />
        <Layer name="dcadgis.DBO.Road" open />
        <SymbolOnly s={{ color: '#6699cd', w: 4, dash: '7 3' }} />
        <Layer name="County_Maintained_Roads" open checked />
        <SymbolOnly s={{ color: '#b4e0c4', w: 4, cap: 'round' }} />
        <Layer name="DenCo_Roads" open />
        <SymbolOnly s={{ color: '#ffff00', w: 2 }} />
        <Layer name="TxDOT_Functional_Classification_Dec24" open />
        <SymbolOnly s={{ color: '#ff7f7f', w: 4, cap: 'round' }} />
        <Layer name="TxDOT_Functional_Classifications_DenCo" />
        <Layer name="dcadgis.DBO.Railroad" open checked />
        <SymbolOnly s={{ color: '#000', w: 1 }} />
      </ul>
      <div className="flex w-[17px] flex-col items-center justify-between bg-[#2b2b2b] py-1">
        <Icon name="up" size={12} />
        <div className="mt-1 h-[570px] w-[9px] rounded-full bg-[#6a6a6a]" />
        <div className="flex-1" />
        <Icon name="chevron" size={12} />
      </div>
    </div>
  </aside>
);

/* ---------- map ---------- */

const parcels: [string, number, number][] = [
  ['161051', 564, 523], ['68013', 870, 383], ['1025473', 1490, 394], ['68277', 2363, 415],
  ['1048797', 855, 615], ['1048796', 856, 825], ['1048896', 1489, 748],
  ['1048815', 2142, 737], ['1048816', 2347, 737], ['1048831', 2483, 731],
  ['1048814', 2143, 810], ['1048817', 2342, 812], ['1048830', 2482, 812],
  ['1048813', 2145, 849], ['1048818', 2344, 849], ['1048829', 2483, 849],
  ['1048798', 2616, 747], ['1048799', 2621, 830], ['1048800', 2619, 849],
];

const addresses: [string, string, number, number, number][] = [
  ['1017', 'Ashcroft Ln', 2162, 2162, 697], ['1014', 'Ashcroft Ln', 2341, 2341, 697], ['1015', 'Butterfly Ln', 2484, 2483, 688],
  ['1015', 'Ashcroft Ln', 2163, 2162, 770], ['1012', 'Ashcroft Ln', 2344, 2343, 769], ['1013', 'Butterfly Ln', 2510, 2510, 768],
  ['1014', 'Butterfly Ln', 2629, 2595, 783],
];

const points = [[2162, 730], [2341, 730], [2483, 721], [2161, 805], [2344, 802], [2487, 802], [2665, 729], [2660, 811]];

const mainStreet = 'M893 618L1510 615 1575 614Q1625 613 1690 622L1821 643Q1930 664 2010 666L2245 665 2666 663';

const MapCanvas = () => (
  <svg viewBox="335 199 2332 659" preserveAspectRatio="xMinYMin slice" className="absolute inset-0 h-full w-full bg-white" role="img" aria-label="Parcel map">
    <g fill="none" stroke="#e69800" strokeWidth="2.5">
      <path d="M889 199L891 567M2064 199V634" />
      <path d="M2074 769H2214M2273 769H2413M2413 692V858M2413 838H2552" />
      <g strokeDasharray="14 4">
        <path d="M776 199L783 858M846 199L850 567 853 858M856 567L857 858M853 663H857" />
        <path d="M850 568L927 567 937 580H1049L1060 567H1121L1131 578 1365 576 1377 564 1436 565 1446 576 1600 575 1680 589 1692 575 1747 583 1762 599 1900 619 1960 626 1994 632 2024 634 2202 635 2212 623 2271 622 2283 634 2414 634 2539 632 2551 622 2607 619 2621 633 2667 632" />
        <path d="M927 858V660L938 649 1510 646Q1600 644 1680 655L1850 684Q1930 698 1992 696L2047 693H2202L2213 703 2214 858" />
        <path d="M2073 693L2074 858M2074 839H2214M2273 838H2413M2413 768H2552" />
        <path d="M2273 858V705L2283 692H2541L2551 703 2552 858M2610 858V699L2621 692H2667M2610 779H2667M2610 849H2667" />
      </g>
    </g>
    <g fill="none" stroke="#8400a8" strokeWidth="4" strokeDasharray="12 5 4 5">
      <path d="M812 199L818 858M891 622V858M2246 667L2247 858M2575 665L2577 858" />
    </g>
    <path d={mainStreet} fill="none" stroke="#3cf0d2" strokeWidth="9" />
    <path d={mainStreet} fill="none" stroke="#22bcb8" strokeWidth="5" strokeDasharray="9 2 3 2" />
    <g fill="#f032e6" stroke="#a01898">
      {points.map(([x, y]) => <circle key={`${x}-${y}`} cx={x} cy={y} r="4.5" />)}
    </g>
    <g className="font-['DejaVu_Sans_Condensed','DejaVu_Sans',sans-serif] text-[18px] font-bold" textAnchor="middle" stroke="#fff" strokeWidth="2" paintOrder="stroke">
      {parcels.map(([t, x, y]) => <text key={t} x={x} y={y + 6} fill="#96502d">{t}</text>)}
      {addresses.map(([no, st, x1, x2, y]) => (
        <g key={`${x1}-${y}`} fill="#8400a8">
          <text x={x1} y={y + 6}>{no}</text>
          <text x={x2} y={y + 26}>{st}</text>
        </g>
      ))}
    </g>
    <g className="font-['Noto_Sans','Open_Sans',sans-serif] text-[21px] font-medium" textAnchor="middle" fill="#2f7d00" stroke="#000" strokeWidth="1.2">
      <text x="2456" y="661">W 7TH ST</text>
      <text transform="translate(833 529) rotate(-90)">STRADER LN</text>
      <text transform="translate(910 738) rotate(-90)">BERKSHIRE DR</text>
      <text transform="translate(2265 762) rotate(-90)">ASHCROFT LN</text>
      <g className="text-[13px]" fill="#000" strokeWidth=".6">
        <text transform="translate(2590 699) rotate(-90)">BUTTERFLY</text>
        <text transform="translate(2608 699) rotate(-90)">LN</text>
      </g>
    </g>
  </svg>
);

const Sep = () => <span className="h-[14px] w-px bg-[#888]" />;

const MapView = () => (
  <section className="relative flex min-h-0 flex-[709] flex-col">
    <div className="flex h-[25px] shrink-0 items-stretch border-b-[3px] border-[#5a5a5a] pr-[6px] text-[#e4e4e4]">
      <div className="flex w-[150px] items-center justify-between rounded-t-[4px] bg-[#5a5a5a] px-[5px]">
        <Icon name="mapTile" />
        Linear Referencing
        <button aria-label="Close view"><Icon name="close" size={13} /></button>
      </div>
      <button className="flex items-center gap-[6px] pl-[6px]"><Icon name="mapTile" />Map</button>
      <button aria-label="View list" className="ml-auto"><Icon name="chevron" size={12} /></button>
    </div>
    <div className="relative min-h-0 flex-1 overflow-hidden"><MapCanvas /></div>
    <div className="absolute top-[15px] left-[402px] flex h-[22px] w-[173px] items-center bg-[#5ab0f0]/10 pl-8 text-[#888]/50">Full-screen Snip</div>
    <div className="flex h-[25px] shrink-0 items-center border-b border-[#5c5c5c] bg-[#333] px-[5px]">
      <div className="relative">
        <select aria-label="Map scale" className="h-[22px] w-[100px] appearance-none border border-[#888] bg-[#1f1f1f] pl-[5px] text-[#e0e0e0]">
          <option>1:985</option>
        </select>
        <Icon name="chevron" size={12} className="pointer-events-none absolute top-[5px] right-px" />
      </div>
      <div className="ml-1 flex items-center gap-1">
        <Sep />
        <button aria-label="Constraints" className="border border-[#4aa3df] bg-[#2a5f8a] p-px"><Icon name="gridPlus" /></button>
        {['grid', 'snap', 'crosshair', 'north'].map((n) => (
          <button key={n} aria-label={n}><Icon name={n} /></button>
        ))}
        <Icon name="chevron" size={12} />
        <Sep />
      </div>
      <div className="flex flex-1 items-center justify-center gap-2">
        97.3281846°W 33.0926838°N <Icon name="chevron" size={12} />
      </div>
      <div className="flex items-center gap-[5px] text-[#e0e0e0]">
        <Sep />
        <button className="flex h-5 items-center gap-1 bg-[#232323] px-[3px]"><Icon name="zoomTo" />Selected Features: 6</button>
        <Sep />
        <button aria-label="Clear selection" className="px-[2px]"><Icon name="clear" /></button>
        <Sep />
        <button aria-label="Pause drawing" className="px-[2px]"><Icon name="pauseBars" size={14} /></button>
        <Sep />
        <button aria-label="Refresh"><Icon name="refresh" /></button>
      </div>
    </div>
  </section>
);

/* ---------- attribute table ---------- */

const tableTabs = [
  ['dcadgis.DBO.Parcel', 'w-[157px]'], ['dcadgis.DBO.Road', 'w-[149px]'], ['Streets RFC', 'w-[112px]'],
  ['dencoAddressPoints', 'w-[162px]'], ['TxDOT_Functional_Classification', 'w-[222px]'], ['Zero_pid_Parcels', 'w-[120px]'],
];

const columns: [string, string][] = [
  ['OBJECTID *', 'w-[66px]'], ['SHAPE *', 'w-[62px]'], ['Shape_Length', 'w-[83px]'], ['JOIN ID', 'w-[134px]'],
  ['STREET NAME', 'w-[261px]'], ['ONE WAY', 'w-[60px]'], ['TRAFFIC FLOW DIR', 'w-[107px]'], ['STREET TYPE', 'w-[134px]'],
  ['STREET SUBTYPE', 'w-[135px]'], ['FIRST ALT NAME', 'w-[134px]'], ['FIRST ALT TYPE', 'w-[135px]'], ['FIRST ALT SUBTYPE', 'w-[134px]'],
  ['SECOND ALT NAME', 'w-[134px]'], ['SECOND ALT TYPE', 'w-[135px]'], ['SECOND ALT SUBTYPE', 'w-[134px]'], ['THIRD ALT NAME', 'w-[135px]'],
  ['THIRD ALT TYPE', 'w-[134px]'], ['THIRD ALT SUBTYPE', 'w-[134px]'], ['NOTES', ''],
];

const NULL = '<Null>';

const features = [
  ['1270', '166.789766', NULL], ['1271', '124.98553', NULL], ['1272', '179.259525', NULL],
  ['1273', '124.145944', NULL], ['1274', '566.524214', NULL], ['1239', '8999.379328', 'W 7TH ST'],
].map(([id, length, name]) => [id, 'Polyline M', length, NULL, name, 'N', NULL, 'LOCAL', 'LOCAL', ...Array(10).fill(NULL)]);

const ToolButton = ({ icon, label, width, dim }: { icon: string; label: string; width: string; dim?: boolean }) => (
  <button className={clsx('flex shrink-0 items-center gap-[3px] whitespace-nowrap', width, dim && 'opacity-35')}>
    <Icon name={icon} />{label}
  </button>
);

const TableToolbar = () => (
  <div className="flex h-[31px] shrink-0 items-center border border-[#666] bg-[#3b3b3b] pr-[7px] pl-[5px]">
    <b className="w-[36px] font-semibold">Field:</b>
    <ToolButton icon="addField" label="Add" width="w-[52px]" />
    <ToolButton icon="calcField" label="Calculate" width="w-[77px]" />
    <span className="h-5 w-px bg-[#555]" />
    <b className="w-[70px] pl-2 font-semibold">Selection:</b>
    <ToolButton icon="selectBy" label="Select By Attributes" width="w-[132px]" />
    <ToolButton icon="zoomTo" label="Zoom To" width="w-[77px]" />
    <ToolButton icon="switch" label="Switch" width="w-[63px]" />
    <ToolButton icon="rows" label="Clear" width="w-[57px]" />
    <ToolButton icon="rowsDelete" label="Delete" width="w-[61px]" />
    <ToolButton icon="rowsCopy" label="Copy" width="w-[58px]" />
    <span className="h-5 w-px bg-[#888]" />
    <b className="w-[84px] pl-2 font-semibold">Highlighted:</b>
    <ToolButton icon="switch" label="Unselect" width="w-[74px]" dim />
    <ToolButton icon="switchHi" label="Reselect" width="w-[72px]" dim />
    <ToolButton icon="zoomTo" label="Zoom To" width="w-[77px]" dim />
    <ToolButton icon="switchHi" label="Switch" width="w-[63px]" />
    <ToolButton icon="rowsCyan" label="Clear" width="w-[57px]" dim />
    <ToolButton icon="rowsDelete" label="Delete" width="w-[61px]" dim />
    <ToolButton icon="rowsCopy" label="Copy" width="w-[58px]" dim />
    <button aria-label="Table menu" className="ml-auto"><Icon name="menu" size={15} /></button>
  </div>
);

const AttributeTable = () => (
  <section className="flex min-h-0 flex-[505] flex-col">
    <div className="flex h-[25px] shrink-0 border-b-[3px] border-[#5a5a5a] pr-1 text-[#e4e4e4]">
      {tableTabs.map(([t, w]) => (
        <div key={t} className={clsx('flex items-center', w, t === 'Streets RFC' && 'rounded-t-[4px] bg-[#5a5a5a]')}>
          <button className="flex items-center gap-[6px] pl-[5px]"><Icon name="gridTable" />{t}</button>
          {t === 'Streets RFC' && <button aria-label="Close table" className="ml-2"><Icon name="close" size={13} /></button>}
        </div>
      ))}
      <button aria-label="Table list" className="ml-auto"><Icon name="chevron" size={12} /></button>
    </div>
    <div className="flex min-h-0 flex-1 flex-col border border-t-0 border-[#5c5c5c] bg-[#333]">
      <TableToolbar />
      <div className="flex min-h-0 flex-1 border-t border-[#5c5c5c] bg-[#232323]">
        <div className="min-w-0 flex-1 overflow-hidden">
          <table className="w-full table-fixed border-collapse text-left whitespace-nowrap">
            <thead>
              <tr className="h-[23px] bg-[#464646] text-[#e4e4e4]">
                <th className="w-[18px] bg-[#232323]"><Icon name="open" size={12} className="mt-1 opacity-40" /></th>
                {columns.map(([c, w], i) => (
                  <th
                    key={c}
                    className={clsx('overflow-hidden border-x border-[#666] px-1 font-medium', w, i === 0 && 'border-b-2 border-b-[#2390f0] bg-[#1c4966]', i === 2 && 'text-right')}
                  >
                    <span className={clsx(i === 4 && 'flex items-center justify-between')}>
                      {c}{i === 4 && <span className="text-[8px] leading-3">▲</span>}
                    </span>
                  </th>
                ))}
              </tr>
            </thead>
            <tbody>
              {features.map((row, r) => (
                <tr key={row[0]} className={clsx('border-b border-[#666] bg-[#148888] text-[#d8e6e6]', r % 3 === 1 ? 'h-[23px]' : 'h-6')}>
                  <td className={clsx('text-center', r === 0 ? 'border-r-2 border-[#2390f0] bg-[#1c4966]' : 'bg-[#464646]')}>{r + 1}</td>
                  {row.map((v, i) => (
                    <td key={i} className={clsx('overflow-hidden border-x border-[#666] px-1', i === 2 && 'text-right', r === 0 && i === 0 && 'bg-[#1c4966]')}>{v}</td>
                  ))}
                </tr>
              ))}
              <tr className="h-6 border-b border-[#666]">
                <td className="bg-[#464646]" />
                <td colSpan={columns.length} className="px-1 text-[#e0e0e0]">Click to add new row.</td>
              </tr>
            </tbody>
          </table>
        </div>
        <div className="flex w-[18px] flex-col items-center justify-between bg-[#2b2b2b] py-1 opacity-60">
          <Icon name="up" size={12} /><Icon name="chevron" size={12} />
        </div>
      </div>
      <div className="flex h-[17px] shrink-0 items-center gap-1 border-b border-[#5c5c5c] bg-[#2b2b2b] px-1">
        <Icon name="up" size={12} className="-rotate-90" />
        <div className="h-[9px] w-[70%] rounded-full bg-[#6a6a6a]" />
        <Icon name="up" size={12} className="ml-auto rotate-90" />
      </div>
      <div className="flex h-[29px] shrink-0 items-center pr-[5px] pl-[7px]">
        <button aria-label="Show all records"><Icon name="rowsCyan" /></button>
        <button aria-label="Show selected records" className="ml-3 flex h-6 w-8 items-center justify-center rounded-[3px] border border-[#2390f0] bg-[#666]"><Icon name="rowsActive" /></button>
        <button aria-label="First" className="ml-2"><Icon name="first" size={12} /></button>
        <button aria-label="Last" className="ml-[10px]"><Icon name="last" size={12} /></button>
        <span className="w-[110px] pl-3 whitespace-nowrap">6 of *2,000 selected</span>
        <span className="ml-2 h-[14px] w-px bg-[#999]" />
        <span className="w-[112px] pl-3 whitespace-nowrap">0 of 6 highlighted</span>
        <button className="h-5 w-[70px] rounded-[2px] border border-[#d0d0d0] bg-[#232323] text-[#e8e8e8]">Load All</button>
        <div className="ml-auto flex items-center gap-[7px]">
          Filters:
          <span className="flex gap-[5px] pl-2">
            <Icon name="dot" /><Icon name="dot" /><Icon name="filterTable" /><Icon name="updown" />
          </span>
          <button aria-label="Zoom out">−</button>
          <input type="range" aria-label="Table zoom" defaultValue="50" className="h-[12px] w-[106px] appearance-none bg-transparent [&::-webkit-slider-runnable-track]:h-px [&::-webkit-slider-runnable-track]:bg-[#999] [&::-webkit-slider-thumb]:-mt-[5px] [&::-webkit-slider-thumb]:h-[11px] [&::-webkit-slider-thumb]:w-1 [&::-webkit-slider-thumb]:appearance-none [&::-webkit-slider-thumb]:bg-[#bbb]" />
          <button aria-label="Zoom in">+</button>
          <button className="flex h-5 w-[62px] items-center justify-between bg-[#232323] px-1">100 % <Icon name="chevron" size={12} /></button>
          <button aria-label="Refresh table" className="ml-1"><Icon name="refresh" /></button>
        </div>
      </div>
    </div>
  </section>
);

/* ---------- attributes pane ---------- */

const fields: [string, string, boolean?][] = [
  ['OBJECTID', '1239', true], ['Shape_Length', '8999.379328', true], ['JOIN ID', NULL], ['STREET NAME', 'W 7TH ST'],
  ['ONE WAY', 'N'], ['TRAFFIC FLOW DIR', NULL], ['STREET TYPE', 'LOCAL'], ['STREET SUBTYPE', 'LOCAL'],
  ['FIRST ALT NAME', NULL], ['FIRST ALT TYPE', NULL], ['FIRST ALT SUBTYPE', NULL],
  ['SECOND ALT NAME', NULL], ['SECOND ALT TYPE', NULL], ['SECOND ALT SUBTYPE', NULL],
  ['THIRD ALT NAME', NULL], ['THIRD ALT TYPE', NULL], ['THIRD ALT SUBTYPE', NULL], ['NOTES', NULL],
  ['GlobalID', '{C499B1C6-3277-4EFC-8CB2-6C7732BBA5D6}', true], ['created_user', NULL, true], ['created_date', NULL, true],
  ['last_edited_user', NULL, true], ['last_edited_date', NULL, true],
];

const dockTabs = [
  ['catalog', 'Cata...'], ['modify', 'Mod...'], ['editForm', 'Crea...'], ['attributes', 'Attri...'], ['symbology', 'Sym...'], ['tag', 'Labe...'],
  ['toolbox', 'Geo...'], ['chart', 'Char...'], ['export', 'Export'], ['history', 'Hist...'], ['manage', 'Man...'],
];

const PaneTabs = ({ tabs }: { tabs: string[] }) => (
  <div className="flex gap-[10px] pl-[7px] text-[12px] text-[#e0e0e0]">
    {tabs.map((t, i) => (
      <button key={t} className={clsx('border-b-2 leading-[20px]', i === 0 ? 'border-[#2390f0] font-semibold' : 'border-transparent')}>{t}</button>
    ))}
  </div>
);

const AttributesPane = () => (
  <aside className="flex w-[761px] shrink-0 flex-col">
    <div className="flex min-h-0 flex-1 flex-col rounded-t-[3px] border border-[#5a5e63] bg-[#333]">
      <div className="flex h-[31px] shrink-0 items-center justify-between pr-[5px] pl-[6px]">
        <h2 className="text-[14px] text-[#e0e0e0]">Attributes</h2>
        <PaneButtons help />
      </div>
      <div className="mt-[3px]"><PaneTabs tabs={['Selection', 'Layers']} /></div>
      <button className="mx-[5px] mt-[11px] flex h-[33px] shrink-0 items-center gap-2 rounded-[3px] border border-[#2390f0] bg-[#1c4966] pr-[2px] pl-[10px] text-[#e4e4e4]">
        <Icon name="select" size={22} />
        Change the selection.
        <Icon name="chevron" size={12} className="ml-auto" />
      </button>
      <div className="mt-2 flex-1 leading-[18px]">
        <div className="flex items-center gap-[6px] pl-[5px]"><Icon name="open" size={8} />Streets RFC (6)</div>
        <ul className="pl-[39px]">
          {['1270', '1271', '1272', '1273', '1274'].map((id) => <li key={id} className="pl-[3px]">{id}</li>)}
          <li className="mr-px border border-[#2a7fd4] bg-[#2f5274] pl-[2px] leading-[16px] text-[#e8e8e8]">W 7TH ST</li>
        </ul>
      </div>
      <div className="h-[10px] shrink-0 bg-[#464646]" />
      <div className="h-[35px] shrink-0 pt-[6px]"><PaneTabs tabs={['Attributes', 'Geometry']} /></div>
      <table className="w-full border-collapse text-left">
        <tbody>
          {fields.map(([name, value, readOnly]) => (
            <tr
              key={name}
              className={clsx('h-[27px] border-y border-[#5c5c5c]', readOnly ? 'text-[#858585]' : 'border-l-2 border-l-[#999] text-[#e4e4e4]', name === 'STREET SUBTYPE' && 'bg-[#41354f]')}
            >
              <th scope="row" className="w-[143px] pl-[7px] font-normal">{name}</th>
              <td>
                <div className="flex items-center justify-between pr-[5px]">
                  {value}
                  {name === 'STREET SUBTYPE' && <button aria-label="Choose value"><Icon name="addRow" size={18} /></button>}
                </div>
              </td>
            </tr>
          ))}
        </tbody>
      </table>
      <label className="flex h-[39px] shrink-0 items-center gap-[5px] pt-[6px] pl-[6px] text-[12px] text-[#e0e0e0]">
        Auto Apply
        <span className="relative flex h-[14px] w-[26px]">
          <input type="checkbox" role="switch" defaultChecked className="h-[14px] w-[26px] appearance-none rounded-full bg-[#2390f0]" />
          <span className="pointer-events-none absolute top-px right-px size-3 rounded-full bg-[#333]" />
        </span>
      </label>
    </div>
    <div className="flex h-5 shrink-0 items-center justify-between pr-1 text-[12px]">
      <div className="flex">
        {dockTabs.map(([icon, label]) => (
          <button
            key={label}
            className={clsx('flex h-5 w-[67px] items-center gap-[5px] pl-[6px] whitespace-nowrap', label === 'Attri...' && 'rounded-b-[4px] border border-t-0 border-[#5c5c5c] bg-[#333] text-[#2390f0]')}
          >
            <Icon name={icon} />{label}
          </button>
        ))}
      </div>
      <Icon name="overflow" size={12} />
    </div>
  </aside>
);

/* ---------- desktop taskbar ---------- */

const taskApps: [string, ReactNode, boolean?][] = [
  ['Start', <path d="M4 6l10-1.500V15H4zM15 4.300L28 2.500V15H15zM4 16h10v10.500L4 25zM15 16h13v12.500l-13-1.800z" fill="#fff" />],
  ['Search', <g fill="none" stroke="#fff" strokeWidth="1.8"><circle cx="18" cy="12" r="7" /><path d="M13 17l-8 9" /></g>],
  ['Internet Explorer', <g fill="none"><path d="M25 17H10q0-8 7-8 6 0 7 6M10 17q1 8 8 8 5 0 7-4" stroke="#3ab4f0" strokeWidth="4" /><path d="M5 28q-4-6 6-16T29 5q2 2-1 7" stroke="#f0c040" strokeWidth="2" /></g>],
  ['File Explorer', <g><path d="M2 5h11l2 3h15v19H2z" fill="#f4c860" /><path d="M2 11h28v16H2z" fill="#fbe08a" /><path d="M8 17h16v11h-5v-5h-6v5H8z" fill="#3aa8e0" /></g>],
  ['WordPad', <g><path d="M4 4h24v22H4z" fill="#dce8f4" /><path d="M4 4h24v4H4z" fill="#4a90d0" /><path d="M8 20l4-9 4 9M9 17h6" stroke="#2a70c0" strokeWidth="2" fill="none" /><path d="M18 12h7M18 16h7M7 23h18" stroke="#e09040" /></g>],
  ['Snipping Tool', <g><ellipse cx="14" cy="10" rx="11" ry="7" fill="#f0f0f0" stroke="#d04040" strokeWidth="2" /><path d="M10 12l14 12M22 12l-4 14" stroke="#c8c8c8" strokeWidth="2" /><circle cx="26" cy="25" r="3" fill="none" stroke="#3aa0e8" strokeWidth="2" /><circle cx="18" cy="27" r="3" fill="none" stroke="#3aa0e8" strokeWidth="2" /></g>],
  ['ArcGIS Pro', <g><path d="M16 1l14 7v16l-14 7-14-7V8z" fill="#1273de" /><circle cx="16" cy="16" r="8" fill="#1273de" stroke="#fff" strokeWidth="2" /><path d="M11 11l6-2 1 4-4 2 1 4-3-1zM18 15l5 1-3 6z" fill="#fff" /></g>, true],
  ['Calculator', <g><path d="M6 2h20v28H6z" fill="#b4d4f0" /><path d="M8 4h16v7H8z" fill="#eef6fc" /><path d="M9 15h3M14 15h3M19 15h4M9 19h3M14 19h3M19 19h4M9 23h3M14 23h3M9 27h3M14 27h3" stroke="#4080c0" strokeWidth="2.5" /><path d="M19 25h4" stroke="#f09030" strokeWidth="6" /></g>],
  ['Performance Monitor', <g><path d="M3 6l24-3 3 18-25 2z" fill="#d8d8d8" /><path d="M7 8l18-2 2 12-19 2z" fill="#f4fbff" /><path d="M9 16l3-5 3 5 3-7 3 7 3-3" stroke="#3a90d0" strokeWidth="2" fill="none" /><path d="M12 23h10l2 7H10z" fill="#b0b0b0" /></g>],
  ['Excel', <g><path d="M2 5l15-3v28L2 27z" fill="#1f7244" /><path d="M17 5h13v22H17z" fill="#fff" stroke="#1f7244" /><path d="M17 10h13M17 16h13M17 21h13M24 5v22" stroke="#1f7244" strokeWidth="1.5" /><path d="M6 11l7 10M13 11L6 21" stroke="#fff" strokeWidth="2.5" /></g>],
  ['Chrome', <g><circle cx="16" cy="16" r="13" fill="#fbc116" /><path d="M16 16L4.700 9.500A13 13 0 0 1 27.300 9.500H16z" fill="#e33b2e" /><path d="M16 16l-5.600 11.700A13 13 0 0 1 4.700 9.500z" fill="#2a9a48" /><circle cx="16" cy="16" r="6.5" fill="#fff" /><circle cx="16" cy="16" r="5" fill="#2f7de8" /></g>, true],
];

const Taskbar = () => (
  <footer className="flex h-10 shrink-0 items-center justify-between bg-[#00040b] pr-1 text-white">
    <div className="flex">
      {taskApps.map(([name, art, active]) => (
        <button key={name} aria-label={name} className={clsx('flex h-10 w-[49px] items-center justify-center border-b-2', active ? 'border-[#76b9ed]' : 'border-transparent')}>
          <svg viewBox="0 0 32 32" className={name === 'Start' || name === 'Search' ? 'size-[18px]' : 'size-[22px]'}>{art}</svg>
        </button>
      ))}
    </div>
    <div className="flex items-center gap-2">
      <svg viewBox="0 0 16 16" className="size-4"><path d="M2 11l6-6 6 6" fill="none" stroke="#fff" strokeWidth="1.3" /></svg>
      <svg viewBox="0 0 16 16" className="size-4"><path d="M4 3.500h11v8H4M9.500 12v3M6 15h7M.500 1.500h4v4h-4zM2.500 6v9h2" fill="none" stroke="#fff" /></svg>
      <svg viewBox="0 0 16 16" className="size-4"><path d="M1 6h2l4-4v12l-4-4H1zM9 6q2 2 0 4M11 4q3 4 0 8M13 2q5 6 0 12" fill="none" stroke="#fff" /></svg>
      <time className="w-16 border-r border-[#555] text-center text-[12px] leading-[18px]">
        8:46 AM<br />6/9/2025
      </time>
    </div>
  </footer>
);

export default function App() {
  return (
    <div className="flex h-screen flex-col overflow-hidden bg-[#3b3b3b] font-['Open_Sans','Noto_Sans',sans-serif] text-[11px] text-[#d4d4d4]">
      <TitleBar />
      <RibbonTabs />
      <Ribbon />
      <main className="flex min-h-0 flex-1 gap-[6px] p-[6px]">
        <Contents />
        <div className="flex min-w-0 flex-1 flex-col gap-[6px] pl-[2px]">
          <MapView />
          <AttributeTable />
        </div>
        <AttributesPane />
      </main>
      <Taskbar />
    </div>
  );
}
